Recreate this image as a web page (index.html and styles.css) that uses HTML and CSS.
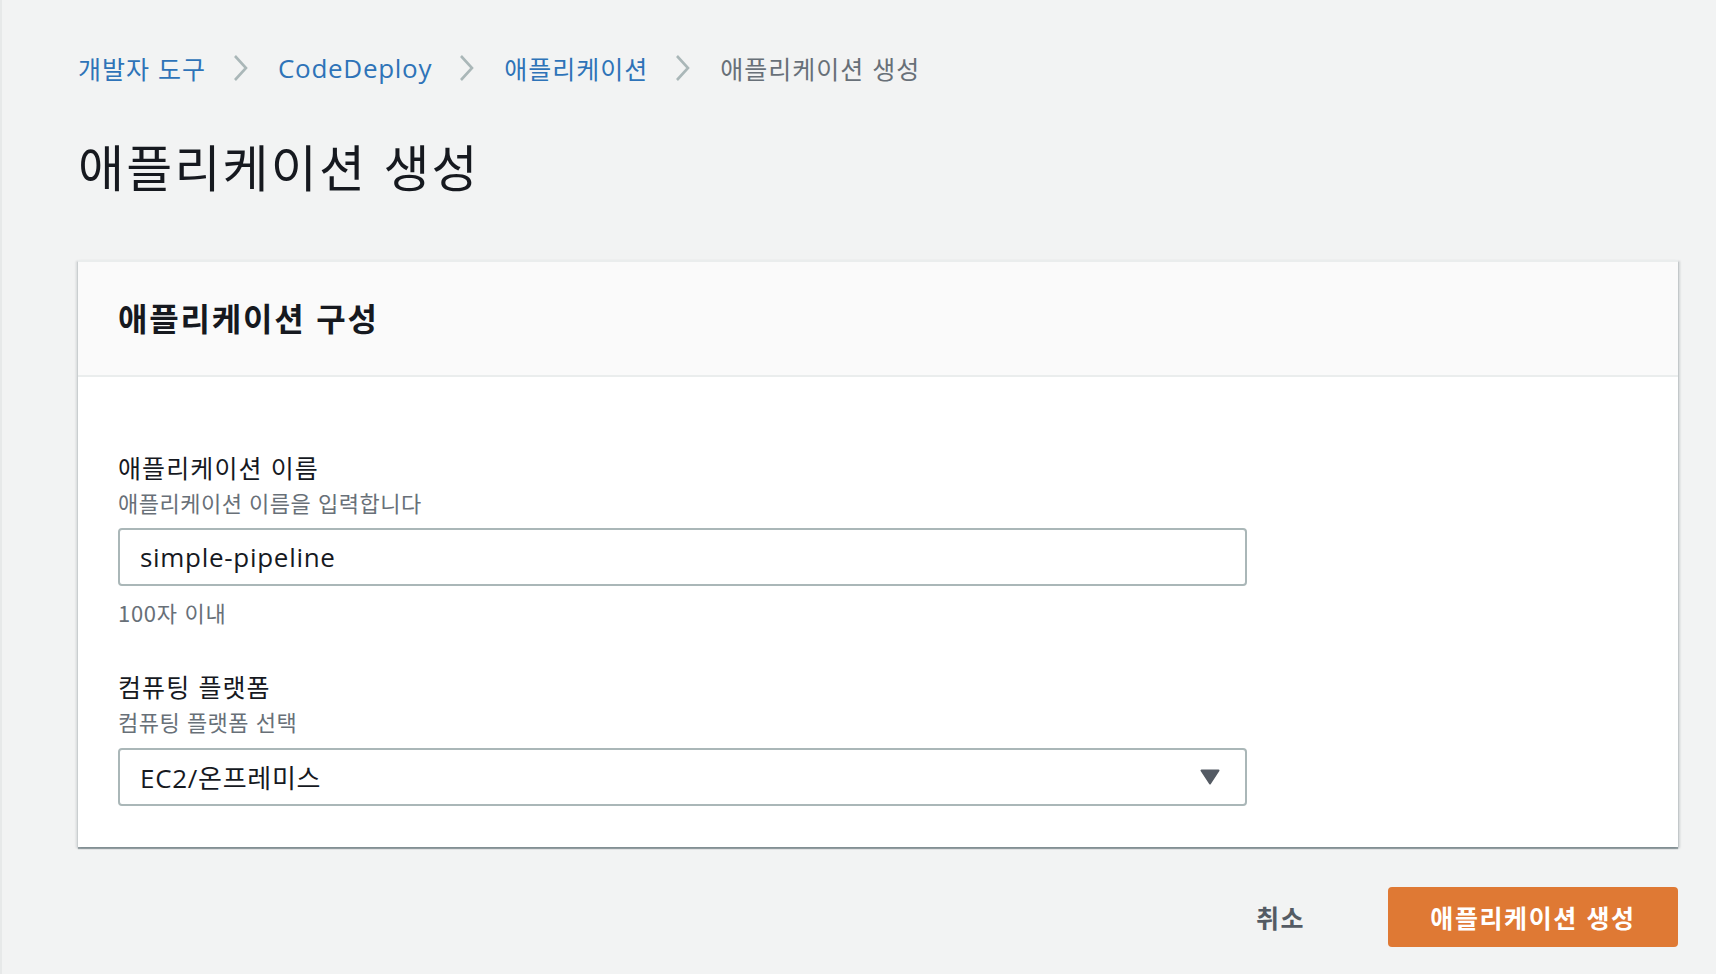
FILE: index.html
```html
<!DOCTYPE html>
<html lang="ko">
<head>
<meta charset="utf-8">
<title>애플리케이션 생성</title>
<link rel="stylesheet" href="styles.css">
</head>
<body>
<div class="page">
  <nav class="crumbs">
    <a class="crumb link" href="#">개발자 도구</a>
    <svg class="chev" width="18" height="28" viewBox="0 0 18 28"><polyline points="3,2 14,14 3,26" fill="none" stroke="#aab7b8" stroke-width="2.6"/></svg>
    <a class="crumb link latin" href="#">CodeDeploy</a>
    <svg class="chev" width="18" height="28" viewBox="0 0 18 28"><polyline points="3,2 14,14 3,26" fill="none" stroke="#aab7b8" stroke-width="2.6"/></svg>
    <a class="crumb link" href="#">애플리케이션</a>
    <svg class="chev" width="18" height="28" viewBox="0 0 18 28"><polyline points="3,2 14,14 3,26" fill="none" stroke="#aab7b8" stroke-width="2.6"/></svg>
    <span class="crumb current">애플리케이션 생성</span>
  </nav>

  <h1 class="page-title">애플리케이션 생성</h1>

  <section class="card">
    <header class="card-head">
      <h2 class="card-title">애플리케이션 구성</h2>
    </header>
    <div class="card-body">
      <div class="field">
        <div class="label">애플리케이션 이름</div>
        <div class="desc">애플리케이션 이름을 입력합니다</div>
        <div class="input latin value">simple-pipeline</div>
        <div class="hint">100자 이내</div>
      </div>
      <div class="field field-second">
        <div class="label">컴퓨팅 플랫폼</div>
        <div class="desc">컴퓨팅 플랫폼 선택</div>
        <div class="input select">
          <span class="latin value">EC2/온프레미스</span>
          <svg class="caret" width="20" height="16" viewBox="0 0 20 16"><path d="M1.5 1.5 H18.5 L10 14.5 Z" fill="#545b64" stroke="#545b64" stroke-width="2" stroke-linejoin="round"/></svg>
        </div>
      </div>
    </div>
  </section>

  <div class="actions">
    <button class="btn-cancel">취소</button>
    <button class="btn-primary">애플리케이션 생성</button>
  </div>
</div>
</body>
</html>
```

FILE: styles.css
```css
* { box-sizing: border-box; }

html, body {
  margin: 0;
  padding: 0;
  background: #f2f3f3;
}

body {
  font-family: "Noto Sans CJK KR", "Noto Sans", sans-serif;
  color: #16191f;
  border-left: 2px solid #e7e9e9;
  min-height: 974px;
}

.latin {
  font-family: "Open Sans", "Noto Sans CJK KR", sans-serif;
}

.page {
  padding: 50px 38px 0 76px;
}

.crumbs {
  display: flex;
  align-items: center;
  height: 36px;
  font-size: 25px;
  letter-spacing: 1px;
}

.crumb {
  line-height: 36px;
  text-decoration: none;
}

.crumb.latin {
  font-size: 26px;
  letter-spacing: 0.7px;
}

.crumb.link { color: #2e73b8; }
.crumb.current { color: #687078; }

.chev {
  display: block;
  margin: 0 28px 0 26px;
}

.page-title {
  margin: 49px 0 0 0;
  font-size: 50px;
  line-height: 60px;
  font-weight: 400;
  letter-spacing: 2.2px;
  color: #16191f;
}

.card {
  margin-top: 65px;
  background: #fff;
  border-top: 2px solid #eaeded;
  box-shadow: 0 2px 1px 0 rgba(0, 28, 36, 0.35),
              2px 1px 2px 0 rgba(0, 28, 36, 0.15),
              -2px 1px 2px 0 rgba(0, 28, 36, 0.12);
}

.card-head {
  height: 115px;
  display: flex;
  align-items: center;
  padding: 0 40px 4px 40px;
  background: #fafafa;
  border-bottom: 2px solid #eaeded;
}

.card-title {
  margin: 0;
  font-size: 32px;
  font-weight: 700;
  letter-spacing: 1.8px;
  color: #16191f;
}

.card-body {
  padding: 74px 40px 41px 40px;
}

.label {
  font-size: 25px;
  line-height: 32px;
  letter-spacing: 1.1px;
  color: #16191f;
}

.desc {
  margin-top: 4px;
  font-size: 22px;
  line-height: 30px;
  letter-spacing: 0.5px;
  color: #687078;
}

.input {
  margin-top: 11px;
  width: 1129px;
  height: 58px;
  border: 2px solid #aab7b8;
  border-radius: 4px;
  padding: 0 20px;
  display: flex;
  align-items: center;
  color: #16191f;
}

.value {
  font-size: 26px;
  letter-spacing: 0.7px;
}

.hint {
  margin-top: 11px;
  font-size: 22px;
  line-height: 30px;
  letter-spacing: 0.7px;
  color: #687078;
}

.field-second {
  margin-top: 43px;
}

.select {
  justify-content: space-between;
  margin-top: 12px;
  padding-right: 25px;
}

.caret { display: block; }

.actions {
  display: flex;
  justify-content: flex-end;
  align-items: center;
  margin-top: 40px;
}

.btn-cancel {
  font-family: "Noto Sans CJK KR", sans-serif;
  font-size: 25px;
  font-weight: 700;
  letter-spacing: 1.5px;
  color: #545b64;
  background: transparent;
  border: none;
  padding: 0 40px;
  height: 60px;
  margin-right: 43px;
}

.btn-primary {
  font-family: "Noto Sans CJK KR", sans-serif;
  font-size: 25px;
  font-weight: 700;
  letter-spacing: 1.6px;
  color: #fff;
  background: #df7934;
  border: none;
  border-radius: 4px;
  width: 290px;
  height: 60px;
  padding: 0;
}
```
